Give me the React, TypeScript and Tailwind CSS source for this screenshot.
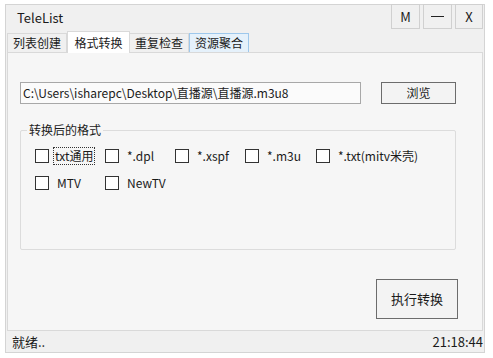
import React from "react";

const font = { fontFamily: '"Noto Sans CJK SC", "Noto Sans", sans-serif' };

function Check({ label, focus, w }: { label: string; focus?: boolean; w: string }) {
  return (
    <div className={`flex items-center ${w}`}>
      <div className="w-[14px] h-[14px] border border-[#333] bg-white shrink-0" />
      <span
        className={`ml-[4px] px-[1px] leading-[16px] ${focus ? "border border-dotted border-[#333]" : "border border-transparent ml-[6px]"}`}
      >
        {label}
      </span>
    </div>
  );
}

export default function App() {
  return (
    <div className="w-[493px] h-[358px] bg-white pt-[4px] pl-[5px] text-[12px] text-[#1a1a1a]" style={font}>
      <div className="w-[480px] h-[349px] bg-[#f0f0f0] border border-[#d4d4d4] flex flex-col">
        {/* title bar */}
        <div className="h-[27px] flex items-center justify-between pl-[11px] pr-[1px]">
          <span className="text-[13px] mt-[-2px]">TeleList</span>
          <div className="flex gap-[3px] self-start mt-[-1px]">
            <div className="w-[29px] h-[25px] border border-[#d0d0d0] flex items-center justify-center text-[13px]">M</div>
            <div className="w-[29px] h-[25px] border border-[#d0d0d0] flex items-center justify-center">
              <div className="w-[13px] h-[1px] bg-[#222]" />
            </div>
            <div className="w-[28px] h-[25px] border border-[#d0d0d0] flex items-center justify-center text-[13px]">X</div>
          </div>
        </div>
        {/* tabs */}
        <div className="h-[20px] flex items-end pl-[1px] relative z-10">
          <div className="h-[19px] w-[60px] border border-[#d9d9d9] border-b-0 flex items-center justify-center">列表创建</div>
          <div className="h-[22px] w-[63px] bg-white border border-[#d9d9d9] border-b-0 flex items-center justify-center mb-[-1px]">格式转换</div>
          <div className="h-[19px] w-[59px] border border-[#d9d9d9] border-b-0 border-l-0 flex items-center justify-center">重复检查</div>
          <div className="h-[19px] w-[60px] bg-[#e5f1fb] border border-[#9ec8ec] border-b-0 flex items-center justify-center">资源聚合</div>
        </div>
        {/* content */}
        <div className="h-[279px] mx-[1px] bg-[#f6f6f6] border border-[#d9d9d9] flex flex-col pl-[12px]">
          <div className="flex items-center mt-[29px]">
            <div className="w-[341px] h-[22px] bg-[#fbfbfb] border border-[#a8a8a8] flex items-center pl-[2px]">
              C:\Users\isharepc\Desktop\直播源\直播源.m3u8
            </div>
            <div className="ml-[20px] w-[75px] h-[22px] border border-[#6c6c6c] bg-[#f3f3f3] flex items-center justify-center">
              浏览
            </div>
          </div>
          <div className="relative mt-[26px] w-[436px] h-[120px] border border-[#dcdcdc] rounded-[2px]">
            <span className="absolute left-[6px] top-[-10px] bg-[#f6f6f6] px-[2px] leading-[18px]">转换后的格式</span>
            <div className="flex flex-col pl-[14px] pt-[16px] gap-[9px]">
              <div className="flex items-center">
                <Check label="txt通用" focus w="w-[70px]" />
                <Check label="*.dpl" w="w-[70px]" />
                <Check label="*.xspf" w="w-[70px]" />
                <Check label="*.m3u" w="w-[71px]" />
                <Check label="*.txt(mitv米壳)" w="w-[120px]" />
              </div>
              <div className="flex items-center">
                <Check label="MTV" w="w-[70px]" />
                <Check label="NewTV" w="w-[80px]" />
              </div>
            </div>
          </div>
          <div className="flex justify-end pr-[24px] mt-[29px]">
            <div className="w-[82px] h-[40px] border border-[#6c6c6c] bg-[#f3f3f3] flex items-center justify-center text-[13px]">
              执行转换
            </div>
          </div>
        </div>
        {/* status */}
        <div className="flex-1 flex items-center justify-between pl-[6px] pr-[1px] text-[13px]">
          <span>就绪..</span>
          <span>21:18:44</span>
        </div>
      </div>
    </div>
  );
}
